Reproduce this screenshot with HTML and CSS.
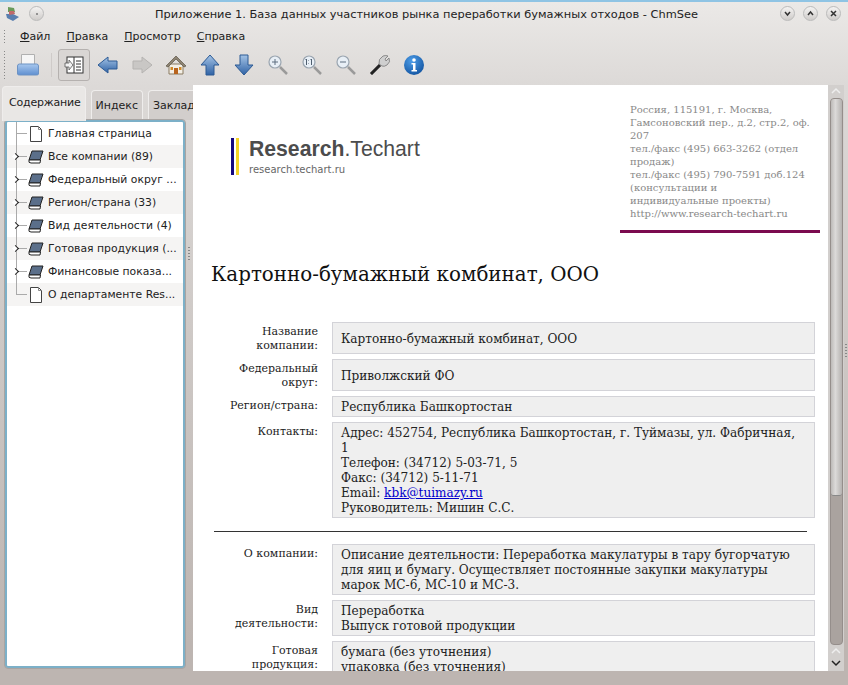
FILE: index.html
```html
<!DOCTYPE html>
<html lang="ru">
<head>
    <meta charset="UTF-8">
    <title>ChmSee</title>
    <link rel="stylesheet" href="styles.css">
</head>
<body>
<div class="window">
    <div class="titlebar">
        <div class="title-left">
            <svg class="app-icon" width="16" height="16" viewBox="0 0 16 16"><path d="M3 1l6 1 1 4-7 0z" fill="#6a9a5a"/><path d="M1 8l7 0 6 3-6 4-6-3z" fill="#5a7fb0"/><path d="M4 5l5 0 1 3-6 1z" fill="#c06a6a"/></svg>
            <span class="win-btn"><span class="dot"></span></span>
        </div>
        <div class="title-text">Приложение 1. База данных участников рынка переработки бумажных отходов - ChmSee</div>
        <div class="title-right">
            <span class="win-btn"><svg width="9" height="9" viewBox="0 0 9 9"><path d="M2 3l2.500 3L7 3" fill="none" stroke="#333" stroke-width="1.500"/></svg></span>
            <span class="win-btn"><svg width="9" height="9" viewBox="0 0 9 9"><path d="M2 6l2.500-3L7 6" fill="none" stroke="#333" stroke-width="1.500"/></svg></span>
            <span class="win-btn"><svg width="9" height="9" viewBox="0 0 9 9"><path d="M2 2l5 5M7 2L2 7" fill="none" stroke="#333" stroke-width="1.500"/></svg></span>
        </div>
    </div>

    <div class="menubar">
        <span class="grip"></span>
        <span class="menu-item"><u>Ф</u>айл</span>
        <span class="menu-item"><u>П</u>равка</span>
        <span class="menu-item"><u>П</u>росмотр</span>
        <span class="menu-item"><u>С</u>правка</span>
    </div>

    <div class="toolbar">
        <span class="grip tall"></span>
        <svg class="tool print" width="24" height="24" viewBox="0 0 24 24"><defs><linearGradient id="tray" x1="0" y1="0" x2="0" y2="1"><stop offset="0" stop-color="#a8c8ee"/><stop offset="1" stop-color="#5f8fd0"/></linearGradient></defs><path d="M5.500 1.500h13v10h-13z" fill="#f6f6f6" stroke="#b0b0b0"/><path d="M1.500 13q0-2 2-2h17q2 0 2 2v8q0 1-2 1h-17q-2 0-2-1z" fill="url(#tray)" stroke="#6d93c4"/></svg>
        <span class="tool-sep"></span>
        <span class="tool-toggle">
            <svg width="20" height="20" viewBox="0 0 20 20"><rect x="3" y="2" width="16" height="16" fill="#fff" stroke="#333"/><path d="M10 2v16M12 6h5M12 9h5M12 12h5M12 15h5" stroke="#333"/><path d="M1 8h4V5l4 5-4 5v-3H1z" fill="#f2f2f2" stroke="#555" stroke-width=".8"/></svg>
        </span>
        <svg class="tool nav" width="22" height="22" viewBox="0 0 22 22"><defs><linearGradient id="blue" x1="0" y1="0" x2="0" y2="1"><stop offset="0" stop-color="#a5c4e6"/><stop offset="1" stop-color="#2f62a5"/></linearGradient></defs><path d="M1 11l10-8v4h9v8h-9v4z" fill="url(#blue)" stroke="#2c5a94"/></svg>
        <svg class="tool nav" width="22" height="22" viewBox="0 0 22 22"><path d="M21 11l-10-8v4H2v8h9v4z" fill="#c9c7c5" stroke="#b5b3b1"/></svg>
        <svg class="tool nav" width="22" height="22" viewBox="0 0 22 22"><path d="M4 10h14v10H4z" fill="#f3efe6" stroke="#8a7a60"/><path d="M1 12L11 2l10 10-2 1-8-8-8 8z" fill="#8d8372" stroke="#5c5446" stroke-width=".7"/><path d="M9 14h4v6H9z" fill="#b8641e"/><path d="M5.500 13h2.500v3H5.500zM14 13h2.500v3H14z" fill="#d08a2a"/></svg>
        <svg class="tool nav" width="22" height="22" viewBox="0 0 22 22"><path d="M11 1l9 10h-5v10H7V11H2z" fill="url(#blue)" stroke="#2c5a94"/></svg>
        <svg class="tool nav" width="22" height="22" viewBox="0 0 22 22"><path d="M11 21l9-10h-5V1H7v10H2z" fill="url(#blue)" stroke="#2c5a94"/></svg>
        <svg class="tool nav" width="22" height="22" viewBox="0 0 22 22"><circle cx="8" cy="8" r="6" fill="#e8eff6" stroke="#9aa5b0" stroke-width="1.200"/><path d="M13 13l7 7" stroke="#9a9a9a" stroke-width="2.500"/><path d="M5 8h6M8 5v6" stroke="#5f6f80"/></svg>
        <svg class="tool nav" width="22" height="22" viewBox="0 0 22 22"><circle cx="8" cy="8" r="6" fill="#e8eff6" stroke="#9aa5b0" stroke-width="1.200"/><path d="M13 13l7 7" stroke="#9a9a9a" stroke-width="2.500"/><path d="M4.500 6l1-1v6M9.500 6l1-1v6M7.500 6.500v.5M7.500 9v.5" fill="none" stroke="#4f5f70"/></svg>
        <svg class="tool nav" width="22" height="22" viewBox="0 0 22 22"><circle cx="8" cy="8" r="6" fill="#e8eff6" stroke="#9aa5b0" stroke-width="1.200"/><path d="M13 13l7 7" stroke="#9a9a9a" stroke-width="2.500"/><path d="M5 8h6" stroke="#5f6f80"/></svg>
        <svg class="tool nav" width="22" height="22" viewBox="0 0 22 22"><path d="M3 21l-2-2 9-9 2 2z" fill="#222" stroke="#555" stroke-width=".6"/><path d="M10 10q-1-5 4-8 3-1 5 0l-3 3 1 2 3-3q2 4-2 7-3 2-5 1z" fill="#cfcfcf" stroke="#777" stroke-width=".8"/></svg>
        <svg class="tool nav" width="22" height="22" viewBox="0 0 22 22"><defs><radialGradient id="info" cx=".4" cy=".3" r=".8"><stop offset="0" stop-color="#4d9de8"/><stop offset="1" stop-color="#0e4f9c"/></radialGradient></defs><circle cx="11" cy="11" r="10" fill="url(#info)"/><circle cx="11" cy="6" r="1.800" fill="#fff"/><path d="M8.500 9h4v7h1.500v1.500H8.500V16H10v-5.500H8.500z" fill="#fff"/></svg>
    </div>

    <div class="main">
        <div class="sidebar">
            <div class="tabs">
                <span class="tab active">Содержание</span>
                <span class="tab">Индекс</span>
                <span class="tab">Закладки</span>
            </div>
            <div class="tree-wrap">
                <div class="tree">
                    <div class="tree-row"><span class="branch"></span><svg class="page" width="14" height="16" viewBox="0 0 14 16"><path d="M1.500 .5h8l3 3v12h-11z" fill="#fff" stroke="#444"/><path d="M9.500 .5v3h3" fill="none" stroke="#888"/></svg><span class="tree-label">Главная страница</span></div>
                    <div class="tree-row has-kids"><span class="branch"></span><svg class="book" width="16" height="14" viewBox="0 0 16 14"><path d="M4 1h11l-3 9H1z" fill="#5b6f8a" stroke="#222"/><path d="M1 10q-1 3 2 3h9l.5-3z" fill="#fff" stroke="#222"/></svg><span class="tree-label">Все компании (89)</span></div>
                    <div class="tree-row has-kids"><span class="branch"></span><svg class="book" width="16" height="14" viewBox="0 0 16 14"><path d="M4 1h11l-3 9H1z" fill="#5b6f8a" stroke="#222"/><path d="M1 10q-1 3 2 3h9l.5-3z" fill="#fff" stroke="#222"/></svg><span class="tree-label">Федеральный округ ...</span></div>
                    <div class="tree-row has-kids"><span class="branch"></span><svg class="book" width="16" height="14" viewBox="0 0 16 14"><path d="M4 1h11l-3 9H1z" fill="#5b6f8a" stroke="#222"/><path d="M1 10q-1 3 2 3h9l.5-3z" fill="#fff" stroke="#222"/></svg><span class="tree-label">Регион/страна (33)</span></div>
                    <div class="tree-row has-kids"><span class="branch"></span><svg class="book" width="16" height="14" viewBox="0 0 16 14"><path d="M4 1h11l-3 9H1z" fill="#5b6f8a" stroke="#222"/><path d="M1 10q-1 3 2 3h9l.5-3z" fill="#fff" stroke="#222"/></svg><span class="tree-label">Вид деятельности (4)</span></div>
                    <div class="tree-row has-kids"><span class="branch"></span><svg class="book" width="16" height="14" viewBox="0 0 16 14"><path d="M4 1h11l-3 9H1z" fill="#5b6f8a" stroke="#222"/><path d="M1 10q-1 3 2 3h9l.5-3z" fill="#fff" stroke="#222"/></svg><span class="tree-label">Готовая продукция (...</span></div>
                    <div class="tree-row has-kids"><span class="branch"></span><svg class="book" width="16" height="14" viewBox="0 0 16 14"><path d="M4 1h11l-3 9H1z" fill="#5b6f8a" stroke="#222"/><path d="M1 10q-1 3 2 3h9l.5-3z" fill="#fff" stroke="#222"/></svg><span class="tree-label">Финансовые показа...</span></div>
                    <div class="tree-row"><span class="branch"></span><svg class="page" width="14" height="16" viewBox="0 0 14 16"><path d="M1.500 .5h8l3 3v12h-11z" fill="#fff" stroke="#444"/><path d="M9.500 .5v3h3" fill="none" stroke="#888"/></svg><span class="tree-label">О департаменте Res...</span></div>
                </div>
                <div class="splitter"><span class="splitter-grip"></span></div>
            </div>
        </div>

        <div class="content">
            <div class="header">
                <div class="logo">
                    <div class="logo-bars"><span class="bar-blue"></span><span class="bar-yellow"></span></div>
                    <div>
                        <div class="logo-name"><b>Research</b>.Techart</div>
                        <div class="logo-url">research.techart.ru</div>
                    </div>
                </div>
                <div class="address">
                    Россия, 115191, г. Москва,<br>
                    Гамсоновский пер., д.2, стр.2, оф. 207<br>
                    тел./факс (495) 663-3262 (отдел продаж)<br>
                    тел./факс (495) 790-7591 доб.124 (консультации и<br>индивидуальные проекты)<br>
                    http://www.research-techart.ru
                </div>
            </div>

            <h1>Картонно-бумажный комбинат, ООО</h1>

            <div class="fields">
                <div class="field-label">Название компании:</div>
                <div class="field-value"><div>Картонно-бумажный комбинат, ООО</div></div>
                <div class="field-label">Федеральный округ:</div>
                <div class="field-value"><div>Приволжский ФО</div></div>
                <div class="field-label">Регион/страна:</div>
                <div class="field-value"><div>Республика Башкортостан</div></div>
                <div class="field-label">Контакты:</div>
                <div class="field-value"><div>Адрес: 452754, Республика Башкортостан, г. Туймазы, ул. Фабричная, 1<br>Телефон: (34712) 5-03-71, 5<br>Факс: (34712) 5-11-71<br>Email: <a href="#">kbk@tuimazy.ru</a><br>Руководитель: Мишин С.С.</div></div>
            </div>

            <hr>

            <div class="fields">
                <div class="field-label">О компании:</div>
                <div class="field-value"><div>Описание деятельности: Переработка макулатуры в тару бугорчатую для яиц и бумагу. Осуществляет постоянные закупки макулатуры марок МС-6, МС-10 и МС-3.</div></div>
                <div class="field-label">Вид деятельности:</div>
                <div class="field-value"><div>Переработка<br>Выпуск готовой продукции</div></div>
                <div class="field-label">Готовая продукция:</div>
                <div class="field-value"><div>бумага (без уточнения)<br>упаковка (без уточнения)</div></div>
            </div>
        </div>

        <div class="scrollbar">
            <svg class="arrow" width="12" height="8" viewBox="0 0 12 8"><path d="M2 6l4-4 4 4" fill="none" stroke="#eee" stroke-width="1.500"/></svg>
            <div class="trough"><div class="thumb"></div></div>
            <svg class="arrow" width="12" height="8" viewBox="0 0 12 8"><path d="M2 6l4-4 4 4" fill="none" stroke="#eee" stroke-width="1.500"/></svg>
            <svg class="arrow arrow-down" width="12" height="8" viewBox="0 0 12 8"><path d="M2 2l4 4 4-4" fill="none" stroke="#222" stroke-width="1.500"/></svg>
        </div>
        <div class="edge"><span class="splitter-grip"></span></div>
    </div>
    <div class="statusbar"></div>
</div>
</body>
</html>
```

FILE: styles.css
```css
* {
    box-sizing: border-box;
    margin: 0;
    padding: 0;
}

html, body {
    height: 100%;
    overflow: hidden;
}

body {
    font-family: "DejaVu Sans", sans-serif;
    font-size: 11px;
    color: #222;
    background: #8fc4e4;
}

.window {
    height: 683px;
    margin-top: 2px;
    display: flex;
    flex-direction: column;
    background: linear-gradient(#ebe9e7 0, #dcd9d7 85px, #bdb5b1 640px);
}

/* title bar */
.titlebar {
    height: 23px;
    flex: none;
    display: flex;
    align-items: center;
    justify-content: space-between;
    padding: 0 7px 0 5px;
}

.title-left, .title-right {
    display: flex;
    align-items: center;
    gap: 8px;
}

.title-text {
    flex: 1;
    text-align: center;
    font-size: 11.360px;
    color: #222;
    padding-left: 29px;
}

.win-btn {
    width: 15px;
    height: 15px;
    border-radius: 50%;
    border: 1px solid #bbb;
    background: linear-gradient(#f4f3f2, #cfccca);
    display: flex;
    align-items: center;
    justify-content: center;
}

.dot {
    width: 2px;
    height: 2px;
    background: #777;
    border-radius: 50%;
}

/* menu */
.menubar {
    height: 23px;
    flex: none;
    display: flex;
    align-items: center;
    padding-left: 3px;
    font-size: 11px;
}

.grip {
    width: 3px;
    height: 15px;
    margin-right: 14px;
    background: radial-gradient(circle, #888 .6px, transparent 1px) 0 0 / 3px 3px;
}

.grip.tall {
    height: 30px;
    margin-right: 10px;
}

.menu-item {
    margin-right: 16px;
}

/* toolbar */
.toolbar {
    height: 37px;
    flex: none;
    display: flex;
    align-items: center;
    padding: 0 0 4px 3px;
}

.tool-sep {
    width: 1px;
    height: 24px;
    margin: 0 6px 0 11px;
    background: #cfcbc9;
}

.tool-toggle {
    width: 32px;
    height: 32px;
    border: 1px solid #b5b1af;
    border-radius: 3px;
    background: #d9d6d4;
    display: flex;
    align-items: center;
    justify-content: center;
    margin-right: 7px;
    flex: none;
}

.tool.nav {
    margin-right: 12px;
    flex: none;
}

.tool.print {
    flex: none;
}

/* main area */
.main {
    flex: none;
    display: flex;
    height: 586px;
}

.sidebar {
    width: 193px;
    flex: none;
    display: flex;
    flex-direction: column;
    padding-left: 3px;
    overflow: hidden;
}

.tabs {
    height: 35px;
    flex: none;
    display: flex;
    align-items: flex-end;
    gap: 5px;
    white-space: nowrap;
}

.tab {
    height: 30px;
    padding: 8px 4px 0;
    border: 1px solid #efedec;
    border-bottom: none;
    border-radius: 4px 4px 0 0;
    background: #d2cecc;
}

.tab.active {
    height: 35px;
    padding: 9px 4px 0 6px;
    background: #e9e7e5;
    letter-spacing: -.2px;
    margin-left: -1px;
    margin-bottom: -1px;
    position: relative;
    z-index: 1;
}

.tree-wrap {
    flex: 1;
    min-height: 0;
    display: flex;
    padding-bottom: 3px;
}

.tree {
    width: 180px;
    margin-left: 2px;
    flex: none;
    background: #fff;
    border: 2px solid #7cb0c8;
    border-radius: 3px;
    outline: 1px solid #a8a4a2;
    overflow: hidden;
}

.tree-row {
    height: 23px;
    display: flex;
    align-items: center;
    position: relative;
    padding-left: 21px;
    font-size: 10.800px;
    white-space: nowrap;
}

.tree-row:nth-child(even) {
    background: #f5f4f3;
}

.branch {
    position: absolute;
    left: 9px;
    top: -1px;
    bottom: 0;
    width: 10px;
    border-left: 1px solid #aaa;
}

.branch::after {
    content: "";
    position: absolute;
    left: 0;
    top: 12px;
    width: 10px;
    border-top: 1px solid #aaa;
}

.tree-row:last-child .branch {
    bottom: 11px;
}

.has-kids::before {
    content: "";
    position: absolute;
    left: 6px;
    top: 9px;
    width: 4px;
    height: 4px;
    border-top: 1.500px solid #222;
    border-right: 1.500px solid #222;
    transform: rotate(45deg);
    background: #fff;
    z-index: 1;
}

.page, .book {
    flex: none;
    width: 16px;
    margin-right: 4px;
}

/* splitter */
.splitter {
    width: 8px;
    flex: none;
    display: flex;
    justify-content: center;
    padding-top: 126px;
}

.splitter-grip {
    display: block;
    width: 2px;
    height: 14px;
    background: radial-gradient(circle, #888 .6px, transparent 1px) 0 0 / 2px 3px;
}

/* page content */
.content {
    width: 635px;
    flex: none;
    background: #fff;
    overflow: hidden;
    height: 586px;
    font-family: "DejaVu Serif", serif;
    font-size: 12.080px;
    line-height: 15px;
    color: #222;
    padding: 0 13px 0 18px;
}

.header {
    display: flex;
    justify-content: space-between;
    height: 147px;
    padding-left: 20px;
    padding-top: 17px;
}

.logo {
    display: flex;
    gap: 10px;
    margin-top: 36px;
    align-self: flex-start;
}

.logo-bars {
    display: flex;
    gap: 2px;
    height: 37px;
}

.bar-blue {
    width: 3px;
    background: #14087e;
}

.bar-yellow {
    width: 3px;
    background: #f5d327;
}

.logo-name {
    font-family: "Liberation Sans", sans-serif;
    font-size: 21.200px;
    line-height: 22px;
    color: #4c4c4c;
}

.logo-url {
    font-family: "DejaVu Sans", sans-serif;
    font-size: 10px;
    line-height: 13px;
    margin-top: 3px;
    color: #666;
}

.address {
    width: 200px;
    height: 131px;
    padding: 1px 10px 0;
    font-size: 10px;
    line-height: 13px;
    color: #888;
    border-bottom: 3px solid #7b0a4f;
    margin-right: -5px;
}

h1 {
    font-size: 19.850px;
    font-weight: normal;
    line-height: 24px;
    color: #111;
    margin: 31px 0 35px 0;
}

.fields {
    display: grid;
    grid-template-columns: 108px 483px;
    column-gap: 14px;
    row-gap: 5px;
    margin-left: -1px;
}

.field-label {
    font-size: 11px;
    line-height: 14px;
    text-align: right;
    padding: 3px 0 1px 18px;
}

.field-value {
    background: #efefef;
    border: 1px solid #d3d3d8;
    padding: 3px 12px 1px 8px;
    display: flex;
    flex-direction: column;
    justify-content: center;
}

.field-value a {
    color: #0000cc;
}

hr {
    border: none;
    border-top: 1px solid #333;
    margin: 13px 8px 12px 3px;
}

/* scrollbar */
.scrollbar {
    width: 16px;
    flex: none;
    display: flex;
    flex-direction: column;
    align-items: center;
    height: 586px;
    background: #d2cfcd;
}

.arrow {
    flex: none;
    margin-top: 2px;
}

.arrow-down {
    margin-top: 4px;
}

.trough {
    width: 13px;
    height: 547px;
    background: #aaa39f;
    border-radius: 4px;
    margin-top: 3px;
    border: 1px solid #958e8b;
}

.thumb {
    height: 397px;
    border-radius: 3px;
    background: linear-gradient(90deg, #bdbab8, #dcdad9 40%, #b5b2b0);
    border-bottom: 1px solid #888;
}

.edge {
    width: 4px;
    flex: none;
    display: flex;
    justify-content: center;
    padding-top: 258px;
}

.statusbar {
    flex: 1;
}
```
